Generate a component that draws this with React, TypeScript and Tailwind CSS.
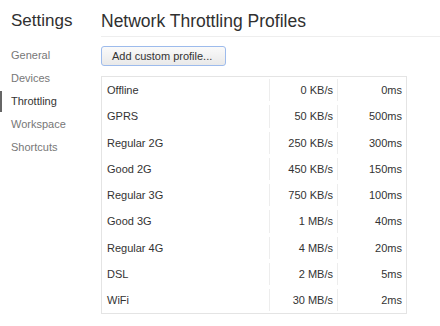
import React from "react";

interface Profile {
  name: string;
  speed: string;
  latency: string;
}

const profiles: Profile[] = [
  { name: "Offline", speed: "0 KB/s", latency: "0ms" },
  { name: "GPRS", speed: "50 KB/s", latency: "500ms" },
  { name: "Regular 2G", speed: "250 KB/s", latency: "300ms" },
  { name: "Good 2G", speed: "450 KB/s", latency: "150ms" },
  { name: "Regular 3G", speed: "750 KB/s", latency: "100ms" },
  { name: "Good 3G", speed: "1 MB/s", latency: "40ms" },
  { name: "Regular 4G", speed: "4 MB/s", latency: "20ms" },
  { name: "DSL", speed: "2 MB/s", latency: "5ms" },
  { name: "WiFi", speed: "30 MB/s", latency: "2ms" },
];

const tabs = ["General", "Devices", "Throttling", "Workspace", "Shortcuts"];

const App: React.FC = () => {
  const selected = "Throttling";

  return (
    <div className="flex w-[440px] h-[326px] bg-white text-[#333] font-['Liberation_Sans',Arial,sans-serif] overflow-hidden">
      {/* sidebar */}
      <div className="w-[101px] shrink-0">
        <div className="pl-[11px] pt-[10px] h-[44px] text-[17px] leading-[22px] text-[#303030]">
          Settings
        </div>
        <ul>
          {tabs.map((tab) => (
            <li
              key={tab}
              className={`relative h-[23px] pl-[11px] text-[11px] leading-[23px] ${
                tab === selected ? "text-[#333]" : "text-[#777]"
              }`}
            >
              {tab === selected && (
                <span className="absolute left-0 top-[1px] w-[2px] h-[21px] bg-[#666]" />
              )}
              {tab}
            </li>
          ))}
        </ul>
      </div>

      {/* main */}
      <div className="flex-1 min-w-0">
        <div className="h-[37px] pt-[10px] text-[17.5px] leading-[22px] text-[#303030] border-b border-[#eee]">
          Network Throttling Profiles
        </div>

        <div className="pt-[9px]">
          <button
            type="button"
            className="block w-[125px] h-[20px] rounded-[3px] border border-[#9dbbec] bg-gradient-to-b from-[#fafafa] to-[#e9e9e9] text-[11px] leading-[18px] text-[#333] text-left pl-[10px]"
          >
            Add custom profile...
          </button>
        </div>

        <div className="mt-[10px] w-[306px] border border-[#e4e4e4]">
          {profiles.map((p) => (
            <div
              key={p.name}
              className="grid grid-cols-[167px_68px_69px] h-[26.25px] py-[2px] text-[11px] leading-[22px]"
            >
              <div className="pl-[5px]">{p.name}</div>
              <div className="border-l border-[#ededed] text-right pr-[4px]">{p.speed}</div>
              <div className="border-l border-[#ededed] text-right pr-[4px]">{p.latency}</div>
            </div>
          ))}
        </div>
      </div>
    </div>
  );
};

export default App;
